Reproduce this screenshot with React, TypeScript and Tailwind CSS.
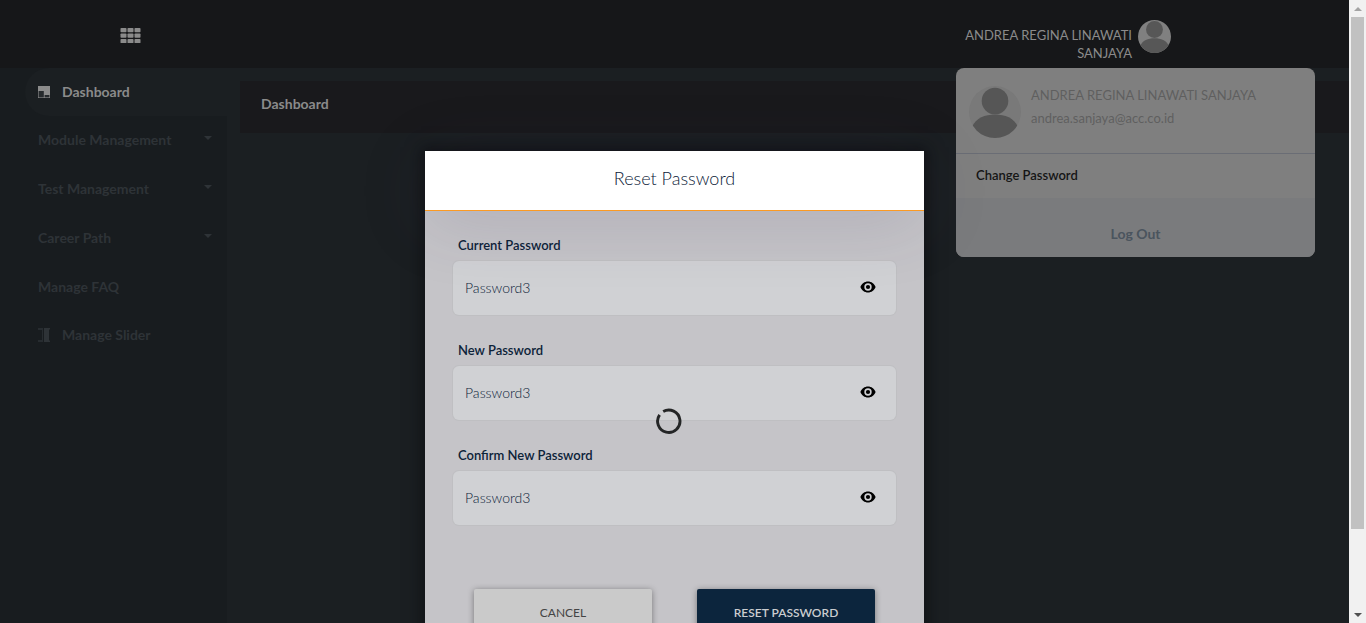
import React, { useId, useState } from "react";

function Avatar({ className, back, front }: { className: string; back: string; front: string }) {
  const clip = useId();
  return (
    <svg viewBox="0 0 52 52" className={className} aria-hidden="true">
      <defs>
        <clipPath id={clip}>
          <circle cx="26" cy="26" r="26" />
        </clipPath>
      </defs>
      <circle cx="26" cy="26" r="26" fill={back} />
      <g clipPath={`url(#${clip})`} fill={front}>
        <circle cx="26" cy="15" r="13.3" />
        <path d="M3 41 C7 32 16 28.6 26 28.6 C36 28.6 45 32 49 41 L46 54 H6 Z" />
      </g>
    </svg>
  );
}

function GridIcon() {
  const cols = [0.5, 7.5, 14.5];
  const rows = [0, 5.5, 11];
  return (
    <svg viewBox="0 0 21 15" className="h-[15px] w-[21px]" fill="#8b8b8b" aria-hidden="true">
      {rows.map((y) => cols.map((x) => <rect key={`${x}-${y}`} x={x} y={y} width="6" height="4.2" rx="0.8" />))}
    </svg>
  );
}

function DashboardIcon() {
  return (
    <svg viewBox="0 0 12 12" className="size-3 shrink-0" aria-hidden="true">
      <rect width="12" height="12" fill="#8b8b8b" />
      <rect x="0.6" y="5" width="5.2" height="6.4" fill="#262a2d" />
      <rect x="6.6" y="9" width="4.8" height="2.4" fill="#262a2d" />
    </svg>
  );
}

function SliderIcon() {
  return (
    <svg viewBox="0 0 12 14" className="h-[14px] w-3 shrink-0" fill="#2e3337" aria-hidden="true">
      <path d="M0 0H5V14H0V12H4V2H0Z" opacity="0.7" />
      <path d="M6 0H12V1.5H11V12.5H12V14H6Z" />
    </svg>
  );
}

function EyeIcon() {
  return (
    <svg viewBox="0 0 16 12" className="h-3 w-4" aria-hidden="true">
      <path
        fill="#000"
        fillRule="evenodd"
        d="M8 0.5C4.6 0.5 1.7 2.7 0.4 6c1.3 3.3 4.2 5.5 7.6 5.5s6.3-2.2 7.6-5.5C14.3 2.7 11.4 0.5 8 0.5zM8 9.7A3.7 3.7 0 1 1 8 2.3a3.7 3.7 0 0 1 0 7.4z"
      />
      <circle cx="8" cy="6" r="2.1" fill="#000" />
    </svg>
  );
}

function Spinner() {
  return (
    <svg viewBox="0 0 26 26" className="size-[26px]" fill="none" role="img" aria-label="Loading">
      <path d="M7.2 3.5A11.2 11.2 0 1 1 3.6 6.8" stroke="#242526" strokeWidth="2.9" />
    </svg>
  );
}

const MENU = [
  { label: "Module Management", sub: true },
  { label: "Test Management", sub: true },
  { label: "Career Path", sub: true },
  { label: "Manage FAQ", sub: false },
];

function Sidebar() {
  return (
    <nav className="w-[227px] shrink-0 bg-[#181c1f] text-sm font-bold text-[#2e3337]">
      <a
        href="#dashboard"
        className="ml-[25px] flex h-12 items-center gap-3 rounded-l-3xl bg-[#1b1f22] pl-[13px] text-[#8b8b8b]"
      >
        <DashboardIcon />
        Dashboard
      </a>
      {MENU.map((item) => (
        <a
          key={item.label}
          href="#menu"
          className="flex h-[49px] items-center justify-between pr-[15px] pb-[2px] pl-[38px]"
        >
          {item.label}
          {item.sub && (
            <svg viewBox="0 0 8 4" className="mb-1 h-1 w-2" fill="#2e3337" aria-hidden="true">
              <path d="M0 0H8L4 4Z" />
            </svg>
          )}
        </a>
      ))}
      <a href="#slider" className="flex h-12 items-center gap-3 pb-[2px] pl-[38px]">
        <SliderIcon />
        Manage Slider
      </a>
    </nav>
  );
}

function UserMenu() {
  return (
    <div className="absolute top-full right-[34px] w-[359px] overflow-hidden rounded-lg bg-[#7f7f7f]">
      <div className="flex h-[86px] gap-[10px] border-b border-[#6a6d75] px-[13px] pt-[18px]">
        <Avatar className="size-[52px] shrink-0" back="#797979" front="#565656" />
        <div className="text-[13px] leading-[23px] text-[#5f5f5f]">
          <p className="-mt-[2px]">ANDREA REGINA LINAWATI SANJAYA</p>
          <p>andrea.sanjaya@acc.co.id</p>
        </div>
      </div>
      <button type="button" className="flex h-11 w-full items-center px-5 text-[13px] font-semibold text-[#151515]">
        Change Password
      </button>
      <button
        type="button"
        className="flex h-[59px] w-full items-center justify-center bg-[#7a7b7d] pt-3 text-sm font-bold text-[#4a545e]"
      >
        Log Out
      </button>
    </div>
  );
}

function PasswordField({ label }: { label: string }) {
  const id = useId();
  const [value, setValue] = useState("Password3");
  const [visible, setVisible] = useState(true);
  return (
    <div className="flex flex-col gap-[6px]">
      <label htmlFor={id} className="pl-[5px] text-[13px] leading-5 font-semibold text-[#0c2238]">
        {label}
      </label>
      <div className="flex h-[54px] items-center rounded-md bg-[#d0d1d4] pr-5 pl-3 ring-1 ring-[#bfbfc2]">
        <input
          id={id}
          type={visible ? "text" : "password"}
          value={value}
          onChange={(e) => setValue(e.target.value)}
          className="min-w-0 flex-1 bg-transparent text-sm font-light text-[#0c2238] outline-none"
        />
        <button type="button" aria-label={`Toggle ${label}`} onClick={() => setVisible(!visible)} className="pb-[2px]">
          <EyeIcon />
        </button>
      </div>
    </div>
  );
}

function ResetDialog() {
  return (
    <section
      role="dialog"
      aria-labelledby="reset-title"
      className="w-[499px] bg-[#c5c4c8] shadow-[0_0_14px_4px_rgba(10,10,14,0.6)]"
    >
      <header className="relative flex h-[60px] items-center justify-center border-b border-[#fb9a24] bg-white pb-[6px] shadow-[0_10px_70px_0_rgba(60,50,90,0.16)]">
        <h2 id="reset-title" className="text-lg font-light text-[#0c2238]">
          Reset Password
        </h2>
      </header>
      <form className="flex flex-col px-7 pt-6" onSubmit={(e) => e.preventDefault()}>
        <div className="flex flex-col gap-[25px]">
          <PasswordField label="Current Password" />
          <PasswordField label="New Password" />
          <PasswordField label="Confirm New Password" />
        </div>
        <div className="flex justify-center gap-[45px] py-16 text-xs">
          <button
            type="button"
            className="h-12 w-[178px] rounded-xs bg-[#cacaca] text-[#444444] shadow-[0_1px_6px_rgba(0,0,0,0.4)]"
          >
            CANCEL
          </button>
          <button
            type="submit"
            className="h-12 w-[178px] rounded-xs bg-[#0c253d] font-semibold text-[#cbcdd0] shadow-[0_1px_6px_rgba(0,0,0,0.4)]"
          >
            RESET PASSWORD
          </button>
        </div>
      </form>
    </section>
  );
}

function ScrollTrack() {
  return (
    <div className="flex w-[17px] shrink-0 flex-col items-center bg-[#f1f1f1]" aria-hidden="true">
      <div className="flex h-[17px] items-center justify-center">
        <svg viewBox="0 0 8 4" className="h-1 w-2" fill="#a3a3a3">
          <path d="M0 4L4 0L8 4Z" />
        </svg>
      </div>
      <div className="flex w-[13px] flex-1 flex-col">
        <div className="h-[87%] bg-[#c1c1c1]" />
      </div>
      <div className="flex h-[17px] items-center justify-center">
        <svg viewBox="0 0 8 4" className="h-1 w-2" fill="#505050">
          <path d="M0 0H8L4 4Z" />
        </svg>
      </div>
    </div>
  );
}

export default function App() {
  return (
    <div className="flex h-screen overflow-hidden font-['Lato','Open_Sans',sans-serif]">
      <div className="relative flex min-w-0 flex-1 flex-col overflow-hidden bg-[#1b1f22]">
        <header className="relative flex h-[68px] shrink-0 items-start justify-between bg-[#161719] pr-[178px] pl-[120px]">
          <button type="button" aria-label="Toggle menu" className="pt-7">
            <GridIcon />
          </button>
          <div className="flex gap-[6px] pt-5">
            <p className="w-[180px] pt-[6px] text-right text-[13px] leading-[18px] text-[#8b8b8b]">
              ANDREA REGINA LINAWATI SANJAYA
            </p>
            <Avatar className="size-[33px]" back="#808080" front="#575757" />
          </div>
          <UserMenu />
        </header>
        <div className="flex flex-1">
          <Sidebar />
          <main className="flex-1 pt-[13px] pl-[13px]">
            <div className="flex h-[52px] items-center bg-[#19191c] px-[21px] pb-[6px]">
              <h1 className="text-sm font-bold text-[#8b8b8b]">Dashboard</h1>
            </div>
          </main>
        </div>
        <div className="absolute inset-0 flex items-start justify-center pt-[151px]">
          <ResetDialog />
        </div>
      </div>
      <div className="absolute top-[421px] left-[49%] -translate-1/2">
        <Spinner />
      </div>
      <ScrollTrack />
    </div>
  );
}
